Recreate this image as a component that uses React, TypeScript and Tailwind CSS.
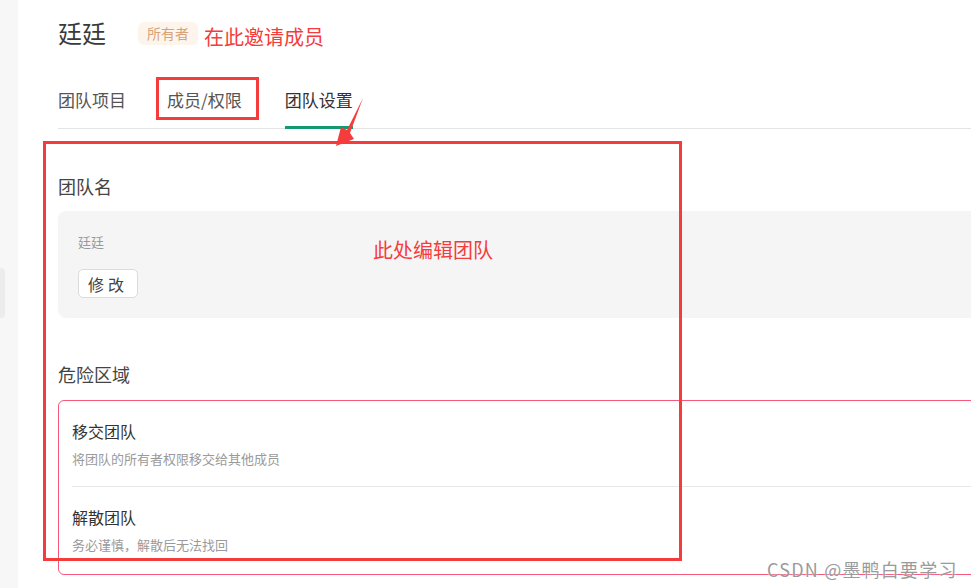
const font = "font-['Noto_Sans_CJK_SC','Noto_Sans',sans-serif]";

function DangerItem({ title, desc, last }: { title: string; desc: string; last?: boolean }) {
  return (
    <div className={`pt-[18px] ${last ? "pb-[19px]" : "pb-[17px] border-b border-[#e8e8e8]"}`}>
      <div className="text-[16px] leading-[24px] text-[#333]">{title}</div>
      <div className="mt-[6px] text-[13px] leading-[20px] text-[#9a9a9a]">{desc}</div>
    </div>
  );
}

export default function App() {
  const tabs = ["团队项目", "成员/权限", "团队设置"];
  return (
    <div className={`relative flex h-[588px] w-[971px] overflow-hidden bg-white ${font}`}>
      {/* sidebar edge */}
      <aside className="w-[18px] shrink-0 bg-[#f7f7f7] pt-[268px]">
        <div className="h-[50px] w-[5px] rounded-r bg-[#ececec]" />
      </aside>

      <main className="min-w-[1000px] flex-1 pl-[40px] pt-[14px]">
        <div className="flex h-[38px] items-center">
          <h1 className="text-[24px] font-normal leading-[38px] text-[#3a3a3a]">廷廷</h1>
          <span className="ml-[32px] rounded-md bg-[#fdf5ec] px-[9px] text-[14px] leading-[23px] text-[#d9a27a]">
            所有者
          </span>
          <span className="ml-[6px] mt-[8px] text-[20px] leading-[24px] text-[#f53c3c]">在此邀请成员</span>
        </div>

        <nav className="mt-[36px] flex gap-[40px] border-b border-[#e4e4e4]">
          {tabs.map((t, i) => (
            <div
              key={t}
              className={`-mb-px border-b-[3px] pb-[14px] text-[17px] leading-[24px] ${
                i === 2 ? "border-[#12996f] text-[#333]" : "border-transparent text-[#555]"
              } ${i === 1 ? "pl-px pr-[3px]" : ""}`}
            >
              {t}
            </div>
          ))}
        </nav>

        <section className="mt-[44px]">
          <h2 className="text-[18px] leading-[26px] text-[#444]">团队名</h2>
          <div className="mt-[12px] h-[107px] rounded-lg bg-[#f5f5f5] px-[20px] pt-[21px]">
            <div className="text-[13px] leading-[20px] text-[#999]">廷廷</div>
            <button className="mt-[17px] h-[29px] w-[60px] rounded-[5px] border border-[#dcdcdc] bg-white text-[16px] tracking-[4px] text-[#444]">
              修改
            </button>
          </div>
        </section>

        <section className="mt-[43px]">
          <h2 className="text-[18px] leading-[26px] text-[#444]">危险区域</h2>
          <div className="mt-[13px] rounded-md border border-[#f5587b] px-[13px]">
            <DangerItem title="移交团队" desc="将团队的所有者权限移交给其他成员" />
            <DangerItem title="解散团队" desc="务必谨慎，解散后无法找回" last />
          </div>
        </section>
      </main>

      {/* annotations */}
      <div className="absolute left-[156px] top-[77px] h-[43px] w-[103px] border-[3px] border-[#f53c3c]" />
      <div className="absolute left-[43px] top-[141px] h-[420px] w-[639px] border-[3px] border-[#f53c3c]" />
      <svg className="absolute left-0 top-0" width="971" height="588" viewBox="0 0 971 588">
        <polygon points="363,98 350,133 354,139 336,146 341,127 347,130" fill="#f53c3c" />
      </svg>
      <div className="absolute left-[373px] top-[237px] text-[20px] leading-[26px] text-[#f53c3c]">此处编辑团队</div>

      <div className="absolute left-[767px] top-[556px] text-[18px] leading-[26px] tracking-[1.2px] text-[#9a9a9a] [text-shadow:0_0_2px_#fff]">
        CSDN @墨鸭白要学习
      </div>
    </div>
  );
}
